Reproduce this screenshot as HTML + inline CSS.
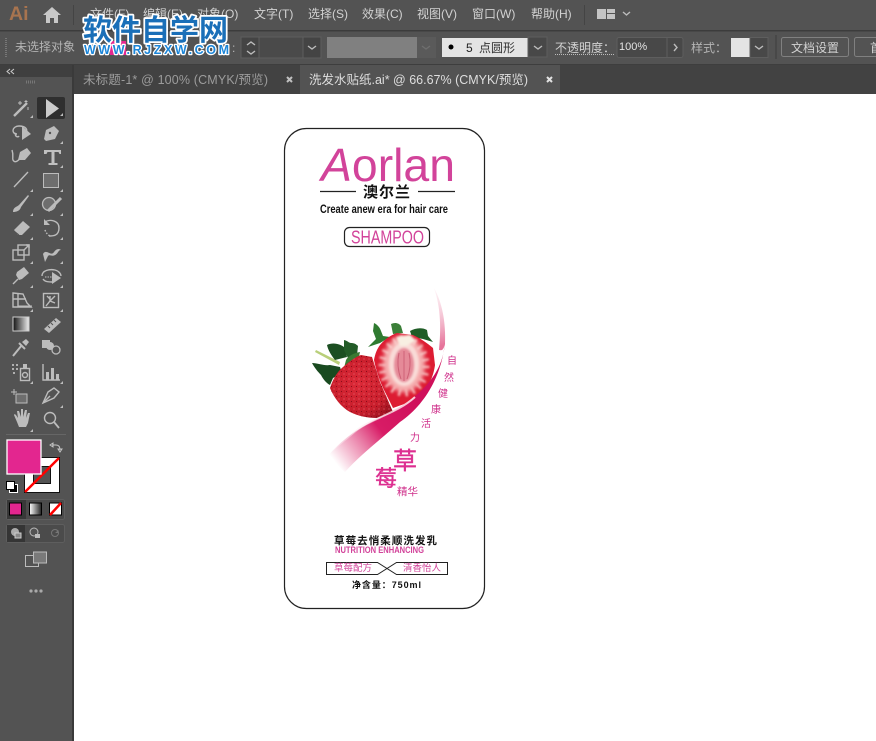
<!DOCTYPE html>
<html><head><meta charset="utf-8">
<style>
html,body{margin:0;padding:0;width:876px;height:741px;overflow:hidden;background:#fff}
svg{display:block}
text{font-family:"Liberation Sans","Noto Sans CJK SC",sans-serif}
.m{font-size:12px;fill:#d2d2d2}
.g{font-size:12px;fill:#b4b4b4}
.ic{fill:none;stroke:#bcbcbc;stroke-width:1.4}
.f{fill:#bcbcbc}
.t{fill:#c0c0c0}
</style></head><body>
<svg width="876" height="741" viewBox="0 0 876 741" xmlns="http://www.w3.org/2000/svg">
<defs>
<linearGradient id="rib" x1="335" y1="462" x2="415" y2="400" gradientUnits="userSpaceOnUse">
<stop offset="0" stop-color="#e0407c" stop-opacity="0"/><stop offset=".22" stop-color="#e0407c" stop-opacity=".45"/><stop offset=".55" stop-color="#d81c66"/><stop offset="1" stop-color="#cf0f5a"/></linearGradient>
<linearGradient id="lite" x1="335" y1="450" x2="410" y2="404" gradientUnits="userSpaceOnUse">
<stop offset="0" stop-color="#fff" stop-opacity=".3"/><stop offset="1" stop-color="#f9c9d6"/></linearGradient>
<linearGradient id="top" x1="436" y1="288" x2="446" y2="345" gradientUnits="userSpaceOnUse">
<stop offset="0" stop-color="#fbe3ea" stop-opacity=".4"/><stop offset="1" stop-color="#e6739a"/></linearGradient>
<radialGradient id="berry" cx=".45" cy=".45" r=".65"><stop offset="0" stop-color="#dc2a38"/><stop offset=".7" stop-color="#c81e2c"/><stop offset="1" stop-color="#9a1220"/></radialGradient>
<linearGradient id="gr" x1="0" x2="1"><stop offset="0" stop-color="#111"/><stop offset="1" stop-color="#eee"/></linearGradient>
<linearGradient id="gr2" x1="0" x2="1"><stop offset="0" stop-color="#fff"/><stop offset="1" stop-color="#222"/></linearGradient>
<pattern id="seed" width="5" height="5" patternUnits="userSpaceOnUse"><circle cx="1.500" cy="1.500" r=".6" fill="#8a0c18"/><circle cx="4" cy="4" r=".6" fill="#e9616c"/></pattern>
<filter id="b1" x="-30%" y="-30%" width="160%" height="160%"><feGaussianBlur stdDeviation="2.500"/></filter>
<filter id="b2" x="-30%" y="-30%" width="160%" height="160%"><feGaussianBlur stdDeviation="1"/></filter>
<clipPath id="hc"><path d="M374 360l6-15 17-12 16 2 20 13 2 17-7 20-18 17-17 6-10-20z"/></clipPath>
</defs>

<!-- chrome -->
<rect width="876" height="741" fill="#535353"/>
<rect x="0" y="30" width="876" height="1.500" fill="#3c3c3c"/>
<rect x="0" y="64" width="876" height="1" fill="#3e3e3e"/>
<rect x="74" y="65" width="802" height="29" fill="#424242"/>
<rect x="0" y="65" width="72" height="12" fill="#3f3f3f"/>
<rect x="72" y="65" width="2" height="676" fill="#3a3a3a"/>
<rect x="74" y="94" width="802" height="647" fill="#fff"/>

<!-- menu -->
<text x="9" y="20" font-size="19.500" style="font-family:'Liberation Sans',sans-serif" font-weight="bold" fill="#a8744f">Ai</text>
<path d="M43 15 52 7 61 15H58V23H54V18H50V23H46V15Z" fill="#c8c8c8"/>
<rect x="73" y="5" width="1" height="20" fill="#444"/>
<text class="m" x="90" y="18">文件(F)</text>
<text class="m" x="143" y="18">编辑(E)</text>
<text class="m" x="197" y="18">对象(O)</text>
<text class="m" x="254" y="18">文字(T)</text>
<text class="m" x="308" y="18">选择(S)</text>
<text class="m" x="362" y="18">效果(C)</text>
<text class="m" x="417" y="18">视图(V)</text>
<text class="m" x="472" y="18">窗口(W)</text>
<text class="m" x="531" y="18">帮助(H)</text>
<rect x="584" y="5" width="1" height="20" fill="#444"/>
<path d="M597 9h9v10h-9zM607 9h8v4h-8zM607 14h8v5h-8z" fill="#c4c4c4"/>
<path d="M623 12l3.500 3 3.500-3" class="ic"/>

<!-- control bar -->
<path d="M6 38v19" stroke="#777" stroke-width="2" stroke-dasharray="1 1"/>
<text class="g" x="15" y="51">未选择对象</text>
<rect x="110" y="41" width="16" height="14" fill="#e5278f"/>
<text x="232" y="52" class="g">:</text>
<rect x="241" y="37" width="80" height="21" rx="2" fill="#4a4a4a" stroke="#5e5e5e"/>
<path d="M241 37h18v21h-18z M303 37h18v21h-18z" fill="#444" stroke="#5e5e5e"/>
<path d="M247 45l4-3 4 3M247 51l4 3 4-3M308 46l4 3 4-3" class="ic"/>
<rect x="327" y="37" width="90" height="21" fill="#808080"/>
<rect x="417" y="37" width="19" height="21" fill="#5a5a5a"/>
<path d="M422 46l4 3 4-3" fill="none" stroke="#6e6e6e" stroke-width="1.400"/>
<rect x="442" y="38" width="86" height="19" fill="#e4e4e4"/>
<rect x="528" y="37" width="19" height="20" fill="#484848" stroke="#5e5e5e"/>
<circle cx="451" cy="47" r="2.500" fill="#000"/>
<text x="466" y="52" font-size="12" fill="#222">5</text>
<text x="479" y="52" font-size="12" fill="#333">点圆形</text>
<path d="M534 46l4 3 4-3" class="ic"/>
<text class="m" x="555" y="52">不透明度：</text>
<path d="M555 54.500h60" stroke="#bbb" stroke-dasharray="1 1"/>
<rect x="617" y="37.500" width="66" height="20" rx="2" fill="#484848" stroke="#5e5e5e"/>
<path d="M667 37.500v20" stroke="#5e5e5e"/>
<text x="619" y="50" font-size="11" fill="#e2e2e2">100%</text>
<path d="M674 44l3 3.500-3 3.500" class="ic"/>
<text class="g" x="691" y="52">样式：</text>
<rect x="731" y="38" width="19" height="19" fill="#e4e4e4"/>
<rect x="750" y="37.500" width="18" height="20" fill="#484848" stroke="#5e5e5e"/>
<path d="M755 46l4 3 4-3" class="ic"/>
<rect x="775" y="35" width="2" height="24" fill="#484848"/>
<rect x="781.500" y="37.500" width="67" height="19" rx="2" fill="#535353" stroke="#808080"/>
<text class="m" x="791" y="52">文档设置</text>
<rect x="854.500" y="37.500" width="40" height="19" rx="2" fill="#535353" stroke="#808080"/>
<text class="m" x="870" y="52">首</text>

<!-- tabs -->
<rect x="300" y="65" width="260" height="29" fill="#535353"/>
<text x="83" y="84" font-size="12.500" fill="#9c9c9c" textLength="185">未标题-1* @ 100% (CMYK/预览)</text>
<path d="M287 77l5 5M292 77l-5 5" stroke="#c0c0c0" stroke-width="2"/>
<text x="309" y="84" font-size="12.500" fill="#dedede">洗发水贴纸.ai* @ 66.67% (CMYK/预览)</text>
<path d="M547 77l5 5M552 77l-5 5" stroke="#e2e2e2" stroke-width="2"/>
<path d="M10 69l-3 2.500 3 2.500M14 69l-3 2.500 3 2.500" fill="none" stroke="#ccc"/>
<path d="M26 82h10" stroke="#777" stroke-width="3" stroke-dasharray="1 1"/>

<!-- tool panel -->
<rect x="37" y="97" width="28" height="22" rx="2" fill="#2f2f2f"/>
<path d="M14 116l13-13" stroke="#bcbcbc" stroke-width="2.400"/><path d="M20 101v4M18 103h4M26 100v3M24.500 101.500h3M28 107v3" stroke="#bcbcbc"/>
<path d="M46 99v19l13-9.500z" fill="#cccccc"/>
<path d="M17 134c-6 0-5-8 2-8s9 4 7 6M16 133c-2 3 2 5 3 3" class="ic"/><path d="M22 126v14l9-6z" class="f"/>
<path d="M44 139l2-9 8-4 5 5-4 8-9 2zM49 134l-4 5" class="f"/><circle cx="50" cy="133" r="1.200" fill="#535353"/>
<path d="M12 150c2 6 0 8 1 10 2 4 6 0 7-2" class="ic"/><path d="M18 160l2-8 7-4 4 5-6 7z" class="f"/>
<path d="M44 150h17v4h-1.500l-1-2h-4v11h3v2h-9v-2h3v-11h-4l-1 2h-2.500z" class="t"/>
<path d="M14 187l14-15" class="ic"/>
<rect x="43.500" y="173.500" width="15" height="14" fill="#6e6e6e" stroke="#bcbcbc"/>
<path d="M13 212c0-5 4-5 6-7l9-10 1 1-8 11c-1 4-5 5-8 5z" class="f"/>
<circle cx="49" cy="204" r="6.500" fill="#6e6e6e" stroke="#bcbcbc" stroke-width="1.300"/><path d="M48 211l13-13" stroke="#bcbcbc" stroke-width="3"/>
<path d="M14 230l9-9 7 6-8 8h-4z" class="f"/><path d="M14 231l5 4" stroke="#535353"/>
<path d="M45 222c4-3 14-2 14 6s-6 8-10 8" class="ic"/><path d="M44 219v6h6z" class="f"/><path d="M45 230c1 3 3 5 5 6" class="ic" stroke-dasharray="1.500 1.500"/>
<rect x="13" y="250" width="11" height="10" class="ic"/><rect x="18" y="245" width="11" height="10" class="ic"/><path d="M24 250l5-5M26 245h3v3" class="ic"/>
<path d="M43 254c3-6 8 3 11-2 2-3 5-4 7-2-3 0-3 4-6 5-3 2-5-1-7 1l-3 6-1-4z" class="f"/>
<path d="M13 284l5-5" class="ic"/><path d="M17 272l7-5 5 6-7 6-3 1-3-5z" class="f"/>
<path d="M42 276c0-6 8-7 13-6 4 1 6 4 6 6" class="ic"/><path d="M43 279c2 3 6 3 9 3" class="ic"/><path d="M52 272v12l9-6z" class="f"/>
<path d="M45 277h7" stroke="#bcbcbc" stroke-dasharray="1.500 1"/>
<path d="M13 293l10 1 4 9 4 4H13z" class="ic"/><path d="M18 293v14M13 299h13" class="ic"/><path d="M18 306h14" stroke="#bcbcbc"/>
<rect x="43.500" y="293.500" width="15" height="14" class="ic"/><path d="M46 306l4-5 5-5M50 301v-5M50 301l5 2M47 296l3 3" class="ic" stroke-width="1"/>
<rect x="13" y="317" width="16" height="14" fill="url(#gr)" stroke="#ccc"/>
<path d="M44 329l12-11 5 4-12 11z" class="f"/><path d="M48 326l2 2M51 323l2 2M54 320l2 2" stroke="#535353"/>
<path d="M13 356l9-11M19 343l6 6" stroke="#bcbcbc" stroke-width="2"/><path d="M22 342l4-3 3 3-3 4z" class="f"/>
<rect x="42" y="340" width="8" height="8" class="f"/><circle cx="50" cy="346" r="4" class="f"/><circle cx="56" cy="350" r="4" fill="#535353" stroke="#bcbcbc" stroke-width="1.300"/>
<path d="M12 365h2M16 365h2M12 369h2M16 369h2M13 373h2" stroke="#b0b0b0" stroke-width="2"/>
<rect x="20.500" y="368.500" width="9" height="12" class="ic"/><circle cx="25" cy="375" r="2.500" class="ic"/><rect x="23" y="364" width="4" height="4" class="f"/>
<path d="M43 364v16h17" class="ic"/><path d="M46 372h3v8h-3zM51 368h3v12h-3zM56 374h3v6h-3z" class="f"/>
<path d="M11 392h6M14 389v6" stroke="#bcbcbc"/><rect x="16" y="394" width="11" height="9" fill="#6e6e6e" stroke="#bcbcbc"/>
<path d="M43 403l5-11 6-4 5 4-5 6z" class="ic"/><path d="M43 403l7-7" class="ic"/>
<path d="M17 422l-3-7c0-1 1-1 2 0l2 3-1-7h2l2 6v-8h2v8l2-7h2l-1 8 2-5h2l-2 10-2 4h-7z" class="f"/>
<circle cx="50" cy="418" r="5.500" class="ic"/><path d="M54 422l5 6" stroke="#bcbcbc" stroke-width="1.800"/>
<path d="M33 118h-3l3-3zM63 116h-3l3-3zM63 144h-3l3-3zM63 168h-3l3-3zM33 192h-3l3-3zM63 192h-3l3-3zM33 216h-3l3-3zM63 216h-3l3-3zM33 240h-3l3-3zM63 240h-3l3-3zM33 264h-3l3-3zM63 264h-3l3-3zM33 288h-3l3-3zM63 288h-3l3-3zM33 312h-3l3-3zM63 312h-3l3-3zM33 384h-3l3-3zM63 384h-3l3-3zM63 408h-3l3-3zM33 432h-3l3-3z" fill="#bcbcbc"/>
<rect x="6" y="434" width="60" height="1" fill="#666"/>
<!-- colours -->
<rect x="24.500" y="457.500" width="35" height="35" fill="#fff" stroke="#111"/>
<rect x="33.500" y="466.500" width="17" height="17" fill="#535353" stroke="#111"/>
<path d="M25 492l34-34" stroke="#f00" stroke-width="2.500"/>
<rect x="7" y="440" width="34" height="34" fill="#e3268f" stroke="#fff" stroke-width="1.300"/>
<path d="M52 445h4c3 0 4 2 4 5M50 445l3-2v4zM60 452l-2-3h4z" fill="none" stroke="#c4c4c4"/>
<rect x="9.500" y="484.500" width="8" height="8" fill="#000" stroke="#fff"/>
<rect x="6.500" y="481.500" width="8" height="8" fill="#fff" stroke="#000"/>
<rect x="6.500" y="499.500" width="58" height="20" rx="2" fill="#4b4b4b" stroke="#5e5e5e"/>
<rect x="7" y="500" width="19" height="19" fill="#383838"/>
<rect x="9.500" y="503" width="12" height="12" fill="#e3268f" stroke="#000"/>
<rect x="29.500" y="503" width="12" height="12" fill="url(#gr2)" stroke="#000"/>
<rect x="49.500" y="503" width="12" height="12" fill="#fff" stroke="#000"/><path d="M50 515l11-12" stroke="#f00" stroke-width="2.500"/>
<rect x="6.500" y="524.500" width="58" height="18" rx="2" fill="#4b4b4b" stroke="#5e5e5e"/>
<rect x="7" y="525" width="18" height="17" fill="#353535"/>
<circle cx="15" cy="532" r="4" fill="#aaa"/><rect x="15" y="533" width="6" height="5" fill="#888" stroke="#ccc"/>
<circle cx="34" cy="532" r="4" fill="#535353" stroke="#bbb"/><rect x="35" y="534" width="5" height="4" fill="#bbb"/>
<circle cx="55" cy="533" r="3.500" fill="none" stroke="#777"/><path d="M55 533h3.500v-3z" fill="#777"/>
<rect x="25.500" y="555.500" width="13" height="11" fill="#535353" stroke="#bcbcbc"/>
<rect x="33.500" y="552" width="13" height="11" fill="#7a7a7a" stroke="#bcbcbc"/>
<circle cx="31" cy="591" r="1.600" fill="#aaa"/><circle cx="36" cy="591" r="1.600" fill="#aaa"/><circle cx="41" cy="591" r="1.600" fill="#aaa"/>

<!-- artwork -->
<rect x="284.500" y="128.500" width="200" height="480" rx="22" fill="#fff" stroke="#222" stroke-width="1.200"/>
<text x="321" y="181" font-size="46" textLength="134" lengthAdjust="spacingAndGlyphs" fill="#d2439a" style="font-family:'Liberation Sans',sans-serif;font-style:italic">A<tspan font-style="normal">orlan</tspan></text>
<path d="M320 191.500h36M418 191.500h37" stroke="#222" stroke-width="1.200"/>
<text x="363" y="197" font-size="15" font-weight="bold" fill="#111" textLength="47">澳尔兰</text>
<text x="320" y="213" font-size="11.500" font-weight="bold" fill="#111" textLength="128" lengthAdjust="spacingAndGlyphs">Create anew era for hair care</text>
<rect x="344.500" y="227.500" width="85" height="19" rx="5" fill="#fff" stroke="#222" stroke-width="1.200"/>
<text x="351" y="243.500" font-size="18" fill="#d2439a" textLength="73" lengthAdjust="spacingAndGlyphs">SHAMPOO</text>

<!-- ribbon upper -->
<path d="M434 288c8 14 12 34 11 56-2 8-4 6-6 6 2-20 2-42-5-62z" fill="url(#top)"/>

<!-- left strawberry -->
<path d="M316 350l24 12-1 3-24-13z" fill="#b9cf7a"/>
<path d="M327 345c6-3 14-1 18 3l2 9-12 3c-4-5-7-10-8-15z" fill="#1c4f22"/>
<path d="M344 340c4 1 5 3 7 3 3 0 5 1 7 3l-1 9-9 3-4-8z" fill="#235c28"/>
<path d="M346 360c2-4 8-7 14-8l-2 9-6 6-8 1z" fill="#3a7a33"/>
<path d="M312 363c6 0 12 3 18 2l10 2 2 6-9 5-3 7c-4-2-7-6-9-10-3-3-7-8-9-12z" fill="#194a20"/>
<path d="M330 388c3-9 7-16 13-21 6-5 12-10 18-12l11 2 8 25 13 30-16 6c-10 0-19-2-27-6-9-5-16-14-20-24z" fill="url(#berry)"/>
<path d="M330 388c3-9 7-16 13-21 6-5 12-10 18-12l11 2 8 25 13 30-16 6c-10 0-19-2-27-6-9-5-16-14-20-24z" fill="url(#seed)"/>
<!-- right strawberry half -->
<path d="M374 323c4 2 6 5 7 8l2 5 7 1-10 6-12 4 8-8-3-8z" fill="#2f7a30"/>
<path d="M391 324c4-2 8-1 10 2l2 7-10 1z" fill="#3b7f38"/>
<path d="M410 331c5-3 12-4 17-1l1 6 5 6-10-3-11-2z" fill="#1f5c26"/>
<path d="M374 360c1-6 3-11 6-15 5-6 11-10 17-12l16 2c7 3 14 8 20 13l2 17c-1 7-3 14-7 20-5 7-11 13-18 17l-17 6-10-20c-4-9-7-18-9-28z" fill="#dd1c32"/>
<g clip-path="url(#hc)">
<ellipse cx="404" cy="364" rx="21" ry="28" fill="#f6b4b4" filter="url(#b1)"/>
<ellipse cx="404" cy="366" rx="22" ry="27" fill="none" stroke="#fbdcd8" stroke-width="7" stroke-dasharray="2 5" opacity=".85" filter="url(#b2)"/>
<ellipse cx="404" cy="364" rx="15" ry="22" fill="#f9dcd8" filter="url(#b2)"/>
<path d="M396 337l14-2 6 6-10 5-6 0z" fill="#f8efe2" filter="url(#b2)"/>
<ellipse cx="404" cy="365" rx="10" ry="17" fill="#e58a98" filter="url(#b2)"/>
<path d="M399 353c-2 9-1 18 2 26M404 351v30M409 353c2 9 1 18-2 26" stroke="#c04860" stroke-width="1" fill="none" opacity=".6"/>
</g>

<!-- ribbon main -->
<path d="M445 342C443 375 420 395 393 412C375 420 350 430 327 457L345 472C360 455 380 440 400 422C425 405 442 375 445 342Z" fill="url(#rib)"/>
<path d="M415 397C395 415 370 418 352 434C345 440 338 445 333 450" fill="none" stroke="url(#lite)" stroke-width="2"/>

<!-- side text -->
<g font-size="10" fill="#cf2e8a">
<text x="447" y="364">自</text><text x="444" y="381">然</text><text x="438" y="397">健</text><text x="431" y="413">康</text><text x="421" y="427">活</text><text x="410" y="441">力</text>
</g>
<text x="393" y="469" font-size="24" fill="#dd2f90" stroke="#dd2f90" stroke-width=".4">草</text>
<text x="375" y="486" font-size="22" fill="#dd2f90" stroke="#dd2f90" stroke-width=".4">莓</text>
<text x="397" y="495" font-size="10.500" fill="#cf2e8a">精华</text>

<!-- bottom -->
<text x="334" y="544" font-size="10.500" font-weight="bold" fill="#111" textLength="103">草莓去悄柔顺洗发乳</text>
<text x="335" y="553" font-size="9" font-weight="bold" fill="#d2439a" textLength="89" lengthAdjust="spacingAndGlyphs">NUTRITION ENHANCING</text>
<path d="M326.500 562.500h51l19 12h51v-12h-51l-19 12h-51z" fill="#fff" stroke="#222"/>
<text x="334" y="571" font-size="9.500" fill="#d2439a">草莓配方</text>
<text x="403" y="571" font-size="9.500" fill="#d2439a">清香怡人</text>
<text x="352" y="588" font-size="9" font-weight="bold" fill="#111" textLength="69">净含量：750ml</text>

<!-- watermark -->
<text x="83" y="40" font-size="29" font-weight="bold" fill="#1a6fb8" stroke="#fff" stroke-width="3.500" stroke-linejoin="round" style="paint-order:stroke">软件自学网</text>
<text x="84" y="54" font-size="12.500" font-weight="bold" fill="#1b85d8" stroke="#fff" stroke-width="2.500" stroke-linejoin="round" textLength="145" style="paint-order:stroke;font-family:'Liberation Sans',sans-serif">WWW.RJZXW.COM</text>
</svg>
</body></html>
